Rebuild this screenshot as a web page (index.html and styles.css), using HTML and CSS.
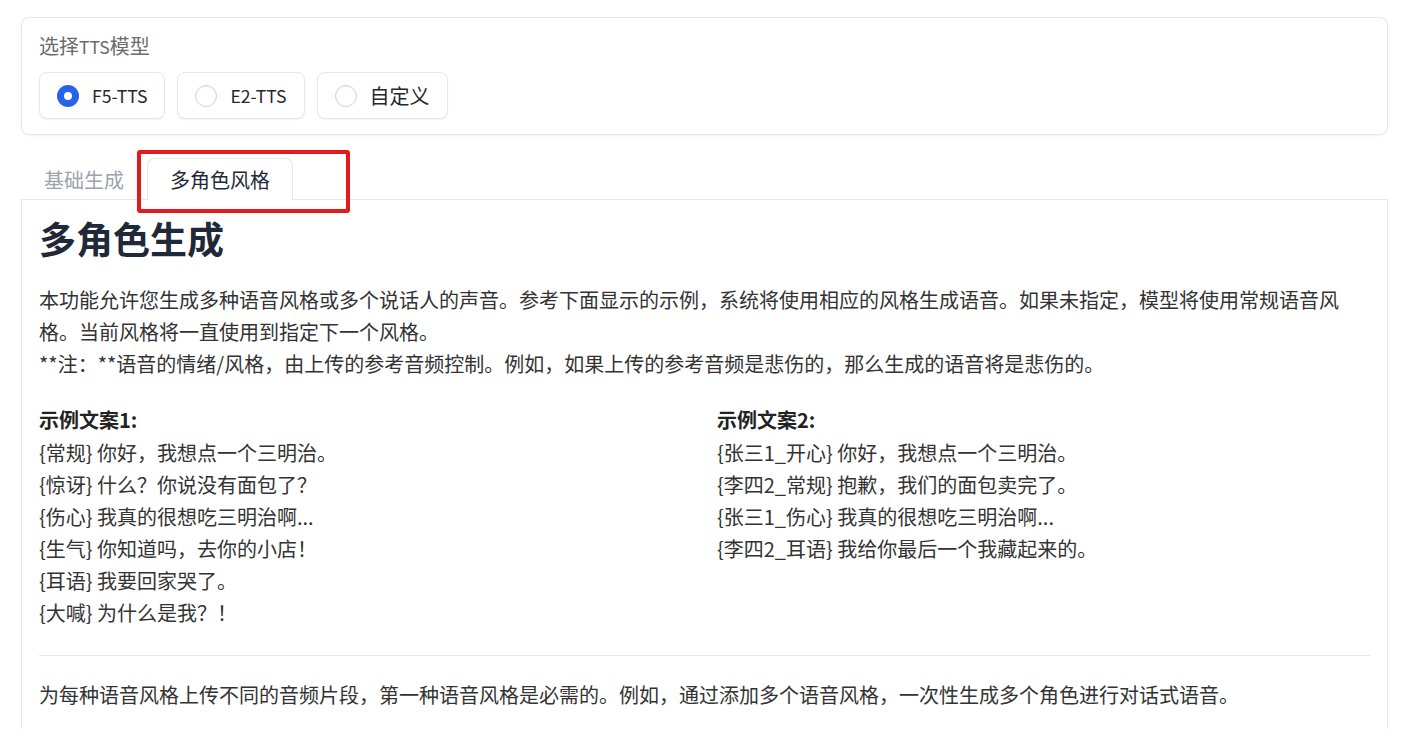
FILE: index.html
```html
<!DOCTYPE html>
<html lang="zh">
<head>
<meta charset="utf-8">
<title>多角色风格</title>
<link rel="stylesheet" href="styles.css">
</head>
<body>
<div class="app">
  <div class="model-box">
    <div class="model-label">选择<span class="lat">TTS</span>模型</div>
    <div class="radio-group">
      <label class="radio checked"><span class="dot"></span><span class="radio-text lat">F5-TTS</span></label>
      <label class="radio"><span class="dot"></span><span class="radio-text lat">E2-TTS</span></label>
      <label class="radio"><span class="dot"></span><span class="radio-text">自定义</span></label>
    </div>
  </div>

  <div class="tabs">
    <div class="tab-nav">
      <button class="tab">基础生成</button>
      <button class="tab selected">多角色风格</button>
    </div>
    <div class="panel">
      <h1 class="title">多角色生成</h1>
      <p class="intro">本功能允许您生成多种语音风格或多个说话人的声音。参考下面显示的示例，系统将使用相应的风格生成语音。如果未指定，模型将使用常规语音风格。当前风格将一直使用到指定下一个风格。<br>**注：**语音的情绪/风格，由上传的参考音频控制。例如，如果上传的参考音频是悲伤的，那么生成的语音将是悲伤的。</p>
      <div class="examples">
        <div class="example">
          <div class="ex-title">示例文案1:</div>
          <div class="ex-line">{常规} 你好，我想点一个三明治。</div>
          <div class="ex-line">{惊讶} 什么？你说没有面包了？</div>
          <div class="ex-line">{伤心} 我真的很想吃三明治啊...</div>
          <div class="ex-line">{生气} 你知道吗，去你的小店！</div>
          <div class="ex-line">{耳语} 我要回家哭了。</div>
          <div class="ex-line">{大喊} 为什么是我？！</div>
        </div>
        <div class="example">
          <div class="ex-title">示例文案2:</div>
          <div class="ex-line">{张三1_开心} 你好，我想点一个三明治。</div>
          <div class="ex-line">{李四2_常规} 抱歉，我们的面包卖完了。</div>
          <div class="ex-line">{张三1_伤心} 我真的很想吃三明治啊...</div>
          <div class="ex-line">{李四2_耳语} 我给你最后一个我藏起来的。</div>
        </div>
      </div>
      <hr class="divider">
      <p class="note">为每种语音风格上传不同的音频片段，第一种语音风格是必需的。例如，通过添加多个语音风格，一次性生成多个角色进行对话式语音。</p>
    </div>
  </div>

  <div class="highlight"></div>
</div>
</body>
</html>
```

FILE: styles.css
```css
html, body {
  margin: 0;
  padding: 0;
  background: #ffffff;
}

body {
  font-family: "Noto Sans CJK SC", "Noto Sans", sans-serif;
  color: #333333;
  overflow: hidden;
}

.app {
  position: relative;
  padding: 17px 24px 0 21px;
}

.lat {
  font-size: 0.88em;
}

.model-box {
  border: 1px solid #e5e7eb;
  border-radius: 8px;
  box-shadow: 0 1px 3px rgba(0, 0, 0, 0.05);
  padding: 14px 17px 15px 17px;
  background: #ffffff;
}

.model-label {
  font-size: 20px;
  line-height: 28px;
  color: #6b6b6b;
  margin-bottom: 11px;
}

.radio-group {
  display: flex;
  gap: 12px;
}

.radio {
  display: flex;
  align-items: center;
  gap: 13px;
  border: 1px solid #e5e7eb;
  border-radius: 8px;
  background: #ffffff;
  box-shadow: 0 1px 2px rgba(0, 0, 0, 0.06);
  padding: 8px 17px 8px 17px;
  font-size: 20px;
  line-height: 29px;
  color: #27272a;
}

.dot {
  box-sizing: border-box;
  width: 22px;
  height: 22px;
  border-radius: 50%;
  border: 1px solid #d4d4d8;
  background: #ffffff;
  box-shadow: inset 0 1px 2px rgba(0, 0, 0, 0.06);
}

.radio.checked .dot {
  border: 7px solid #2563eb;
  background: #ffffff;
  box-shadow: none;
}

.tabs {
  margin-top: 23px;
}

.tab-nav {
  display: flex;
  border-bottom: 1px solid #f0f0f2;
}

.tab {
  font-family: inherit;
  font-size: 20px;
  line-height: 30px;
  padding: 6px 22px 5px 22px;
  border: 1px solid transparent;
  border-bottom: none;
  background: transparent;
  color: #9ca3af;
  margin: 0 0 -1px 0;
}

.tab.selected {
  border-color: #e5e7eb;
  border-radius: 8px 8px 0 0;
  background: #ffffff;
  color: #1f2937;
  position: relative;
  z-index: 1;
}

.panel {
  border: 1px solid #e5e7eb;
  margin-top: -1px;
  padding: 16px 17px 40px 17px;
  font-size: 20px;
  line-height: 32px;
}

.title {
  margin: 0;
  font-size: 37px;
  line-height: 44px;
  font-weight: 700;
  color: #1f2937;
}

.intro {
  margin: 24px 0 0 0;
}

.examples {
  display: grid;
  grid-template-columns: 1fr 1fr;
  column-gap: 25px;
  margin-top: 24px;
}

.ex-title {
  font-weight: 700;
  color: #222222;
  margin-bottom: 1px;
}

.divider {
  border: none;
  border-top: 1px solid #e5e7eb;
  margin: 26px 0 0 0;
}

.note {
  margin: 23px 0 0 0;
}

.highlight {
  position: absolute;
  left: 137px;
  top: 150px;
  width: 213px;
  height: 63px;
  box-sizing: border-box;
  border: 4px solid #e3191b;
  border-radius: 3px;
  z-index: 5;
}
```
